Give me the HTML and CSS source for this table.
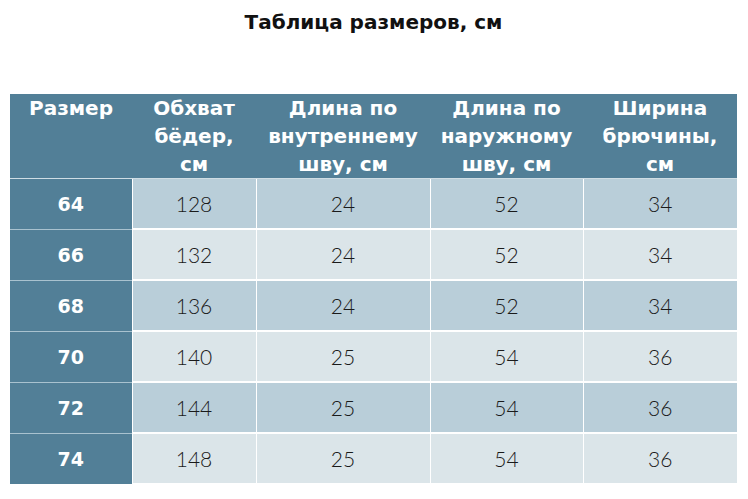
FILE: index.html
```html
<!DOCTYPE html>
<html lang="ru">
<head>
<meta charset="utf-8">
<link rel="stylesheet" href="styles.css">
</head>
<body>
<h1 class="title">Таблица размеров, см</h1>
<table class="sizes">
  <colgroup>
    <col class="c1"><col class="c2"><col class="c3"><col class="c4"><col class="c5">
  </colgroup>
  <thead>
    <tr>
      <th>Размер</th>
      <th>Обхват<br>бёдер,<br>см</th>
      <th>Длина по<br>внутреннему<br>шву, см</th>
      <th>Длина по<br>наружному<br>шву, см</th>
      <th>Ширина<br>брючины,<br>см</th>
    </tr>
  </thead>
  <tbody>
    <tr class="dark"><th>64</th><td>128</td><td>24</td><td>52</td><td>34</td></tr>
    <tr class="light"><th>66</th><td>132</td><td>24</td><td>52</td><td>34</td></tr>
    <tr class="dark"><th>68</th><td>136</td><td>24</td><td>52</td><td>34</td></tr>
    <tr class="light"><th>70</th><td>140</td><td>25</td><td>54</td><td>36</td></tr>
    <tr class="dark"><th>72</th><td>144</td><td>25</td><td>54</td><td>36</td></tr>
    <tr class="light"><th>74</th><td>148</td><td>25</td><td>54</td><td>36</td></tr>
  </tbody>
</table>
</body>
</html>
```

FILE: styles.css
```css
html, body {
  margin: 0;
  padding: 0;
  background: #ffffff;
}
body {
  padding: 10px 11px 0 10px;
  font-family: "Lato", "DejaVu Sans", sans-serif;
}
.title {
  margin: 0;
  height: 84px;
  line-height: 24px;
  text-align: center;
  font-family: "DejaVu Sans", sans-serif;
  font-size: 20px;
  font-weight: 700;
  color: #111111;
}
.sizes {
  width: 727px;
  border-collapse: collapse;
  table-layout: fixed;
}
.c1 { width: 122px; }
.c2 { width: 124px; }
.c3 { width: 174px; }
.c4 { width: 153px; }
.c5 { width: 154px; }
thead th {
  background: #527f97;
  color: #ffffff;
  font-family: "DejaVu Sans", sans-serif;
  font-weight: 700;
  font-size: 20px;
  line-height: 28px;
  height: 84px;
  padding: 0;
  vertical-align: top;
  box-sizing: border-box;
  border-bottom: 1px solid #cfdde4;
}
tbody th {
  background: #527f97;
  color: #ffffff;
  font-family: "DejaVu Sans", sans-serif;
  font-weight: 700;
  font-size: 19px;
  height: 49px;
  padding: 0;
  border-top: 1px solid #a9c2cf;
}
tbody td {
  text-align: center;
  font-size: 21px;
  font-weight: 300;
  color: #1a1a1a;
  height: 49px;
  padding: 0;
  border: 1.5px solid #ffffff;
  border-top-width: 2px;
}
tbody tr:first-child th,
tbody tr:first-child td { border-top: none; }
tbody td:last-child { border-right: none; }
tr.dark td { background: #b9ced9; }
tr.light td { background: #dbe5e9; }
```
